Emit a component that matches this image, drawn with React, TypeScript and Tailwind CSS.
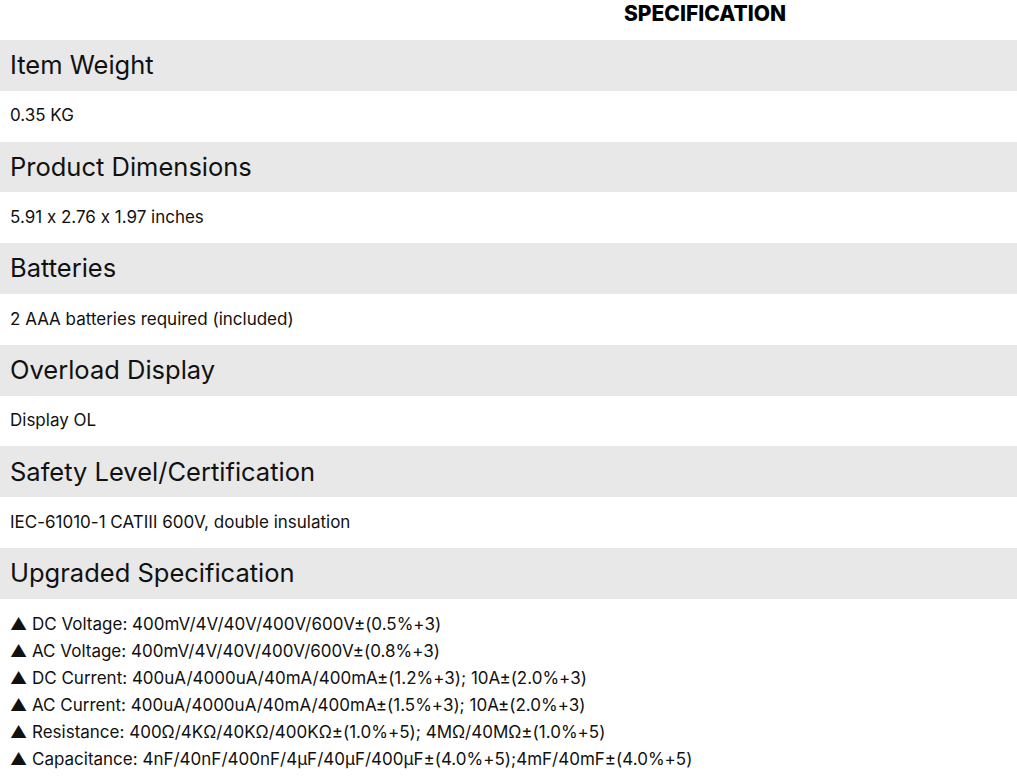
import React from "react";

const rows: [string, string][] = [
  ["Item Weight", "0.35 KG"],
  ["Product Dimensions", "5.91 x 2.76 x 1.97 inches"],
  ["Batteries", "2 AAA batteries required (included)"],
  ["Overload Display", "Display OL"],
  ["Safety Level/Certification", "IEC-61010-1 CATⅢ 600V, double insulation"],
];

const specs = [
  "DC Voltage: 400mV/4V/40V/400V/600V±(0.5%+3)",
  "AC Voltage: 400mV/4V/40V/400V/600V±(0.8%+3)",
  "DC Current: 400uA/4000uA/40mA/400mA±(1.2%+3); 10A±(2.0%+3)",
  "AC Current: 400uA/4000uA/40mA/400mA±(1.5%+3); 10A±(2.0%+3)",
  "Resistance: 400Ω/4KΩ/40KΩ/400KΩ±(1.0%+5); 4MΩ/40MΩ±(1.0%+5)",
  "Capacitance: 4nF/40nF/400nF/4μF/40μF/400μF±(4.0%+5);4mF/40mF±(4.0%+5)",
];

export default function App() {
  return (
    <div className="w-[1017px] h-[784px] overflow-hidden bg-white text-black font-['Inter',sans-serif] [font-feature-settings:'calt'_0]">
      <div className="h-[40px] flex items-start pt-[1px] pl-[624px]">
        <span className="text-[21px] font-extrabold leading-[26px]">SPECIFICATION</span>
      </div>
      {rows.map(([h, v]) => (
        <div key={h}>
          <div className="h-[50.8px] bg-[#e8e8e8] flex items-center pl-[10px] text-[25.5px] text-[#111]">{h}</div>
          <div className="h-[50.8px] flex items-center pl-[10px] text-[17px] text-[#111]">{v}</div>
        </div>
      ))}
      <div className="h-[50.8px] bg-[#e8e8e8] flex items-center pl-[10px] text-[25.5px] text-[#111]">Upgraded Specification</div>
      <div className="pt-[12px] pl-[10px] text-[17px] text-[#111]">
        {specs.map((s) => (
          <div key={s} className="h-[27px] leading-[27px] whitespace-nowrap">▲ {s}</div>
        ))}
      </div>
    </div>
  );
}
